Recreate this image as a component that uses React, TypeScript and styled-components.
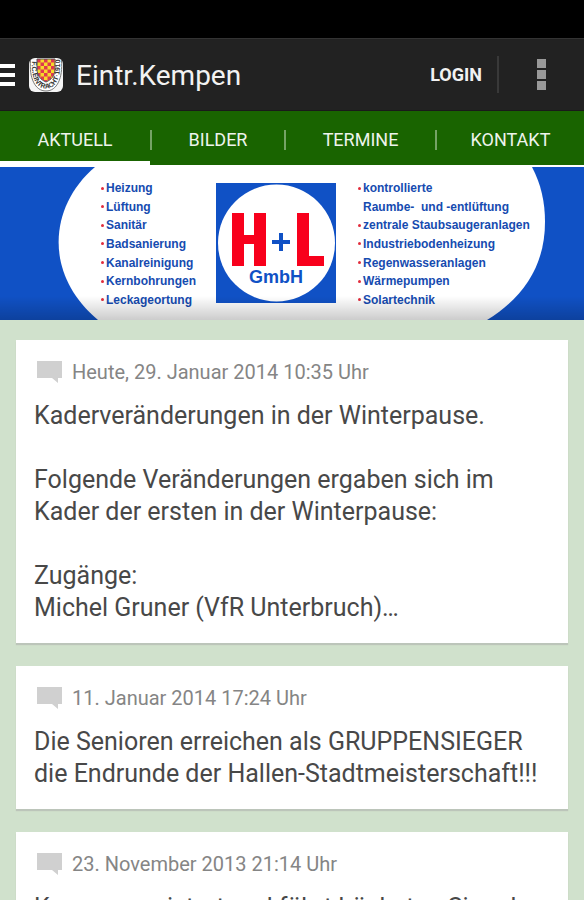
import React from "react";
import styled, { createGlobalStyle, css } from "styled-components";

const GlobalStyle = createGlobalStyle`
  * { box-sizing: border-box; }
  html, body, #root { height: 100%; }
  body {
    margin: 0;
    overflow: hidden;
    background: #d0e1cc;
    font-family: Roboto, "Liberation Sans", sans-serif;
  }
  button { border: 0; padding: 0; background: none; font: inherit; color: inherit; cursor: pointer; }
`;

const Page = styled.div`
  height: 100%;
  overflow: hidden;
  display: flex;
  flex-direction: column;
`;

const StatusBar = styled.div`
  flex: none;
  height: 38px;
  background: #000;
`;

const ActionBar = styled.header`
  flex: none;
  display: flex;
  align-items: center;
  height: 73px;
  background: #222;
  border-top: 1px solid #333;
  border-bottom: 1px solid #1a1a1a;
  color: #f2f2f2;
`;

const MenuButton = styled.button`
  display: flex;
  margin-right: 13px;
`;

const Title = styled.h1`
  flex: 1;
  margin: 0 0 0 13px;
  padding-top: 2px;
  font-size: 28px;
  line-height: 32px;
  font-weight: 400;
`;

const LoginButton = styled.button`
  padding-right: 15px;
  font-size: 18px;
  line-height: 36px;
  font-weight: 700;
`;

const OverflowButton = styled.button`
  display: flex;
  justify-content: center;
  width: 87px;
  height: 37px;
  align-items: center;
  border-left: 2px solid #393939;
`;

const Tabs = styled.nav`
  flex: none;
  display: flex;
  height: 54px;
  background: #196400;
`;

const Tab = styled.a<{ $active?: boolean; $grow: number }>`
  flex: ${(p) => p.$grow} 1 0;
  display: flex;
  align-items: center;
  border-bottom: 4px solid ${(p) => (p.$active ? "#fff" : "transparent")};
  padding-top: 8px;
  color: #eef4ec;
  font-size: 18px;
  line-height: 20px;
  text-decoration: none;
  text-align: center;
`;

const TabLabel = styled.span<{ $divided?: boolean }>`
  flex: 1;
  ${(p) => p.$divided && css`border-left: 2px solid #75a366;`}
`;

const Banner = styled.section`
  flex: none;
  position: relative;
  display: grid;
  grid-template-columns: 196fr 160fr 228fr;
  align-items: start;
  height: 155px;
  padding-top: 12px;
  border-top: 2px solid #fff;
`;

const Backdrop = styled.svg`
  position: absolute;
  inset: 0;
  width: 100%;
  height: 100%;
  z-index: -1;
`;

const Shade = styled.div`
  position: absolute;
  left: 0;
  right: 0;
  bottom: 0;
  height: 24px;
  background: linear-gradient(transparent, rgba(0, 0, 0, 0.2));
`;

const Services = styled.ul<{ $align: "start" | "end" }>`
  display: grid;
  grid-auto-rows: 1fr;
  justify-self: ${(p) => p.$align};
  height: 130px;
  margin: 0;
  padding: 0 0 0 2px;
  list-style: none;
  color: #164bb0;
  font-family: "Liberation Sans", sans-serif;
  font-size: 12px;
  line-height: 16px;
  font-weight: 700;
  white-space: pre;
`;

const Service = styled.li<{ $continued?: boolean }>`
  display: flex;
  align-items: center;
  gap: 2px;
  &::before {
    content: "";
    width: 3px;
    height: 3px;
    border-radius: 50%;
    background: ${(p) => (p.$continued ? "transparent" : "#e22c3c")};
  }
`;

const CompanyLogo = styled.svg`
  display: block;
  justify-self: center;
  margin-top: 4px;
`;

const Feed = styled.main`
  display: flex;
  flex-direction: column;
  gap: 23px;
  padding: 20px 16px;
`;

const Card = styled.article`
  flex: none;
  padding: 20px 18px 19px;
  background: #fff;
  box-shadow: 0 2px 1px #bcc5ba;
`;

const Meta = styled.div`
  display: flex;
  align-items: center;
  gap: 10px;
  padding-left: 3px;
  color: #858585;
  font-size: 20px;
  line-height: 24px;
`;

const Body = styled.p`
  margin: 16px 0 0;
  color: #484848;
  font-size: 25px;
  line-height: 32px;
  white-space: pre-line;
`;

const posts = [
  {
    date: "Heute, 29. Januar 2014 10:35 Uhr",
    text: "Kaderveränderungen in der Winterpause.\n\nFolgende Veränderungen ergaben sich im\nKader der ersten in der Winterpause:\n\nZugänge:\nMichel Gruner (VfR Unterbruch)…",
  },
  {
    date: "11. Januar 2014 17:24 Uhr",
    text: "Die Senioren erreichen als GRUPPENSIEGER\ndie Endrunde der Hallen-Stadtmeisterschaft!!!",
  },
  {
    date: "23. November 2013 21:14 Uhr",
    text: "Kempen meistert und führt höchsten Sieg der\nSaison ein.",
  },
];

const leftServices = ["Heizung", "Lüftung", "Sanitär", "Badsanierung", "Kanalreinigung", "Kernbohrungen", "Leckageortung"];
const rightServices = ["kontrollierte", "Raumbe-  und -entlüftung", "zentrale Staubsaugeranlagen", "Industriebodenheizung", "Regenwasseranlagen", "Wärmepumpen", "Solartechnik"];

const ClubCrest = () => (
  <svg width="34" height="34" viewBox="0 0 34 34" role="img" aria-label="F.C. Eintracht 1910">
    <defs>
      <pattern id="checks" width="7" height="7" x="8" y="1" patternUnits="userSpaceOnUse">
        <rect width="7" height="7" fill="#f6d82b" />
        <path d="M0 0h3.500v3.500H0zM3.500 3.500H7V7H3.500z" fill="#e0384e" />
      </pattern>
      <path id="ring" d="M3 3C2 20 7 30.500 17 30.500S32 20 31 3" />
    </defs>
    <rect width="34" height="34" rx="6" fill="#f5f5f5" />
    <path d="M1.500 2C0 20 6 33 17 33S34 20 32.500 2" fill="#fff" stroke="#777" />
    <path d="M8 1H26V11C26 18 22 22 17 24C12 22 8 18 8 11Z" fill="url(#checks)" stroke="#555" />
    <text fontFamily="Liberation Sans" fontWeight="700" fontSize="7" fill="#333">
      <textPath href="#ring" startOffset="0">F.C.EINTRACHT·1910</textPath>
    </text>
  </svg>
);

const HLLogo = () => (
  <CompanyLogo width="120" height="120" viewBox="0 0 120 120" role="img" aria-label="H+L GmbH">
    <rect width="120" height="120" fill="#1051c5" />
    <circle cx="60.500" cy="60" r="58.500" fill="#fff" />
    <path d="M16 30h12v22h10V30h12v53H38V61H28v22H16zM81 30h12v43h15v10H81z" fill="#f8001c" />
    <path d="M56 57h7v-7h4v7h7v4h-7v7h-4v-7h-7z" fill="#1051c5" />
    <text x="60" y="100" textAnchor="middle" fontFamily="Liberation Sans" fontWeight="700" fontSize="18" fill="#1051c5">GmbH</text>
  </CompanyLogo>
);

export default function App() {
  return (
    <>
      <GlobalStyle />
      <Page>
        <StatusBar />
        <ActionBar>
          <MenuButton aria-label="Menü">
            <svg width="16" height="24" viewBox="0 0 16 24" fill="#fff">
              <path d="M0 1h15v4H0zM0 10h15v4H0zM0 19h15v4H0z" />
            </svg>
          </MenuButton>
          <ClubCrest />
          <Title>Eintr.Kempen</Title>
          <LoginButton>LOGIN</LoginButton>
          <OverflowButton aria-label="Weitere Optionen">
            <svg width="9" height="32" viewBox="0 0 9 32" fill="#999">
              <path d="M0 0h9v9H0zM0 11h9v9H0zM0 22h9v9H0z" />
            </svg>
          </OverflowButton>
        </ActionBar>
        <Tabs>
          <Tab href="#aktuell" $active $grow={150}><TabLabel>AKTUELL</TabLabel></Tab>
          <Tab href="#bilder" $grow={134}><TabLabel $divided>BILDER</TabLabel></Tab>
          <Tab href="#termine" $grow={151}><TabLabel $divided>TERMINE</TabLabel></Tab>
          <Tab href="#kontakt" $grow={149}><TabLabel $divided>KONTAKT</TabLabel></Tab>
        </Tabs>
        <Banner>
          <Backdrop viewBox="0 0 584 153" preserveAspectRatio="none" aria-hidden="true">
            <rect width="584" height="153" fill="#1051c5" />
            <path d="M95 0C49 39 43 107 98 153H487C526 129 545 96 545 55C545 35 541 17 532 0Z" fill="#fff" />
          </Backdrop>
          <Services $align="end">
            {leftServices.map((label) => <Service key={label}>{label}</Service>)}
          </Services>
          <HLLogo />
          <Services $align="start">
            {rightServices.map((label, i) => <Service key={label} $continued={i === 1}>{label}</Service>)}
          </Services>
          <Shade />
        </Banner>
        <Feed>
          {posts.map((post) => (
            <Card key={post.date}>
              <Meta>
                <svg width="25" height="22" viewBox="0 0 25 22" fill="#d0d0d0" aria-hidden="true">
                  <path d="M0 0h25v17h-4v5l-6-5H0z" />
                </svg>
                <time>{post.date}</time>
              </Meta>
              <Body>{post.text}</Body>
            </Card>
          ))}
        </Feed>
      </Page>
    </>
  );
}
